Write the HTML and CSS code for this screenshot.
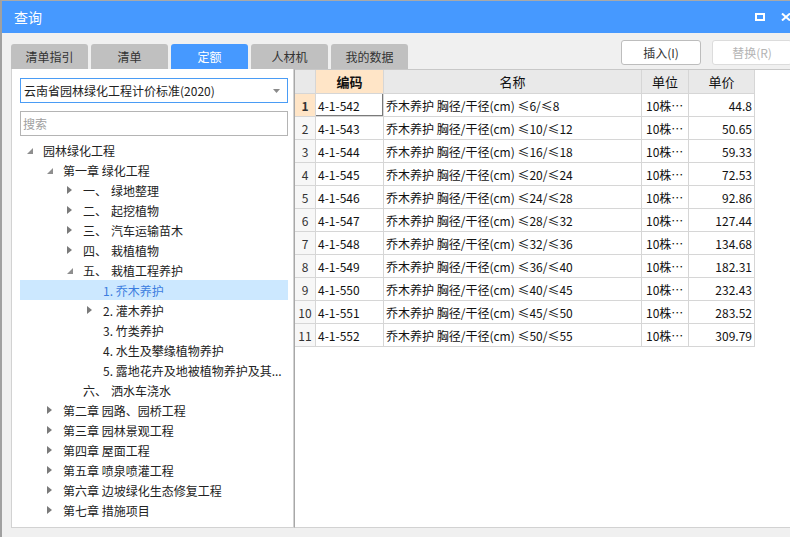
FILE: index.html
```html
<!DOCTYPE html>
<html lang="zh-CN">
<head>
<meta charset="utf-8">
<title>查询</title>
<link rel="stylesheet" href="styles.css">
</head>
<body>
<div class="window">
  <div class="titlebar">
    <span class="title">查询</span>
    <div class="winbtns">
      <svg class="ico-max" width="10" height="8" viewBox="0 0 10 8"><rect x="1" y="1" width="8" height="6" fill="none" stroke="#fff" stroke-width="2"/></svg>
      <svg class="ico-close" width="10" height="8" viewBox="0 0 10 8"><path d="M1 0.5 L9 7.5 M9 0.5 L1 7.5" stroke="#fff" stroke-width="2"/></svg>
    </div>
  </div>
  <div class="toolbar">
    <div class="tabs">
      <div class="tab">清单指引</div>
      <div class="tab">清单</div>
      <div class="tab active">定额</div>
      <div class="tab">人材机</div>
      <div class="tab">我的数据</div>
    </div>
    <div class="actions">
      <button class="btn">插入(I)</button>
      <button class="btn disabled">替换(R)</button>
    </div>
  </div>
  <div class="main">
    <div class="left">
      <div class="select">
        <span>云南省园林绿化工程计价标准(2020)</span>
        <svg class="caret" width="7" height="4" viewBox="0 0 7 4"><path d="M0 0 L7 0 L3.5 4 Z" fill="#8a8a8a"/></svg>
      </div>
      <div class="search">搜索</div>
      <ul class="tree">
        <li class="node lv0"><span class="tw"><i class="exp"></i></span><span>园林绿化工程</span></li>
        <li class="node lv1"><span class="tw"><i class="exp"></i></span><span>第一章 绿化工程</span></li>
        <li class="node lv2"><span class="tw"><i class="col"></i></span><span class="num">一、</span><span>绿地整理</span></li>
        <li class="node lv2"><span class="tw"><i class="col"></i></span><span class="num">二、</span><span>起挖植物</span></li>
        <li class="node lv2"><span class="tw"><i class="col"></i></span><span class="num">三、</span><span>汽车运输苗木</span></li>
        <li class="node lv2"><span class="tw"><i class="col"></i></span><span class="num">四、</span><span>栽植植物</span></li>
        <li class="node lv2"><span class="tw"><i class="exp"></i></span><span class="num">五、</span><span>栽植工程养护</span></li>
        <li class="node lv3 sel"><span class="tw"></span><span>1. 乔木养护</span></li>
        <li class="node lv3"><span class="tw"><i class="col"></i></span><span>2. 灌木养护</span></li>
        <li class="node lv3"><span class="tw"></span><span>3. 竹类养护</span></li>
        <li class="node lv3"><span class="tw"></span><span>4. 水生及攀缘植物养护</span></li>
        <li class="node lv3"><span class="tw"></span><span>5. 露地花卉及地被植物养护及其...</span></li>
        <li class="node lv2"><span class="tw"></span><span class="num">六、</span><span>洒水车浇水</span></li>
        <li class="node lv1"><span class="tw"><i class="col"></i></span><span>第二章 园路、园桥工程</span></li>
        <li class="node lv1"><span class="tw"><i class="col"></i></span><span>第三章 园林景观工程</span></li>
        <li class="node lv1"><span class="tw"><i class="col"></i></span><span>第四章 屋面工程</span></li>
        <li class="node lv1"><span class="tw"><i class="col"></i></span><span>第五章 喷泉喷灌工程</span></li>
        <li class="node lv1"><span class="tw"><i class="col"></i></span><span>第六章 边坡绿化生态修复工程</span></li>
        <li class="node lv1"><span class="tw"><i class="col"></i></span><span>第七章 措施项目</span></li>
      </ul>
    </div>
    <div class="grid-panel">
      <div class="grid">
        <div class="c h"></div>
        <div class="c h cur">编码</div>
        <div class="c h">名称</div>
        <div class="c h">单位</div>
        <div class="c h">单价</div>

        <div class="c rn cur">1</div>
        <div class="c focus">4-1-542</div>
        <div class="c">乔木养护 胸径/干径(cm) ≤6/≤8</div>
        <div class="c u">10株…</div>
        <div class="c r">44.8</div>

        <div class="c rn">2</div>
        <div class="c">4-1-543</div>
        <div class="c">乔木养护 胸径/干径(cm) ≤10/≤12</div>
        <div class="c u">10株…</div>
        <div class="c r">50.65</div>

        <div class="c rn">3</div>
        <div class="c">4-1-544</div>
        <div class="c">乔木养护 胸径/干径(cm) ≤16/≤18</div>
        <div class="c u">10株…</div>
        <div class="c r">59.33</div>

        <div class="c rn">4</div>
        <div class="c">4-1-545</div>
        <div class="c">乔木养护 胸径/干径(cm) ≤20/≤24</div>
        <div class="c u">10株…</div>
        <div class="c r">72.53</div>

        <div class="c rn">5</div>
        <div class="c">4-1-546</div>
        <div class="c">乔木养护 胸径/干径(cm) ≤24/≤28</div>
        <div class="c u">10株…</div>
        <div class="c r">92.86</div>

        <div class="c rn">6</div>
        <div class="c">4-1-547</div>
        <div class="c">乔木养护 胸径/干径(cm) ≤28/≤32</div>
        <div class="c u">10株…</div>
        <div class="c r">127.44</div>

        <div class="c rn">7</div>
        <div class="c">4-1-548</div>
        <div class="c">乔木养护 胸径/干径(cm) ≤32/≤36</div>
        <div class="c u">10株…</div>
        <div class="c r">134.68</div>

        <div class="c rn">8</div>
        <div class="c">4-1-549</div>
        <div class="c">乔木养护 胸径/干径(cm) ≤36/≤40</div>
        <div class="c u">10株…</div>
        <div class="c r">182.31</div>

        <div class="c rn">9</div>
        <div class="c">4-1-550</div>
        <div class="c">乔木养护 胸径/干径(cm) ≤40/≤45</div>
        <div class="c u">10株…</div>
        <div class="c r">232.43</div>

        <div class="c rn">10</div>
        <div class="c">4-1-551</div>
        <div class="c">乔木养护 胸径/干径(cm) ≤45/≤50</div>
        <div class="c u">10株…</div>
        <div class="c r">283.52</div>

        <div class="c rn">11</div>
        <div class="c">4-1-552</div>
        <div class="c">乔木养护 胸径/干径(cm) ≤50/≤55</div>
        <div class="c u">10株…</div>
        <div class="c r">309.79</div>
      </div>
    </div>
  </div>
</div>
</body>
</html>
```

FILE: styles.css
```css
html, body {
  margin: 0;
  padding: 0;
}
body {
  width: 790px;
  height: 537px;
  overflow: hidden;
  background: #f0f0f0;
  font-family: "Noto Sans CJK SC", "Microsoft YaHei", sans-serif;
  font-size: 12px;
  color: #222;
}
.window {
  height: 537px;
  box-sizing: border-box;
  border-top: 1px solid #a9a9a9;
  border-left: 2px solid #a0a0a0;
  display: flex;
  flex-direction: column;
}
.titlebar {
  height: 32px;
  flex: none;
  background: #4699ff;
  color: #fff;
  display: flex;
  align-items: center;
  padding-left: 12px;
  font-size: 14px;
}
.winbtns {
  margin-left: auto;
  margin-right: -1px;
  display: flex;
  align-items: center;
  gap: 16px;
}
.winbtns svg {
  display: block;
}
.toolbar {
  height: 36px;
  flex: none;
  display: flex;
  align-items: flex-end;
  padding-left: 9px;
}
.tabs {
  display: flex;
  gap: 3px;
}
.tab {
  width: 77px;
  height: 25px;
  background: #c0c0c0;
  border-radius: 3px 3px 0 0;
  display: flex;
  align-items: center;
  justify-content: center;
  color: #333;
  font-size: 12px;
}
.tab.active {
  background: #4699ff;
  color: #fff;
}
.actions {
  margin-left: auto;
  margin-right: -2px;
  align-self: flex-start;
  margin-top: 7px;
  display: flex;
  gap: 11px;
}
.btn {
  width: 80px;
  height: 25px;
  box-sizing: border-box;
  border: 1px solid #bdbdbd;
  border-radius: 3px;
  background: #fff;
  font-family: inherit;
  font-size: 12px;
  color: #333;
  padding: 0;
}
.btn.disabled {
  color: #b4b4b4;
  border-color: #dcdcdc;
}
.main {
  height: 459px;
  flex: none;
  display: flex;
}
.left {
  margin-left: 9px;
  width: 283px;
  flex: none;
  box-sizing: border-box;
  background: #fff;
  border: 1px solid #d2d2d2;
  border-top: none;
  padding: 9px 5px 0 8px;
  overflow: hidden;
}
.select {
  height: 25px;
  box-sizing: border-box;
  border: 1px solid #4a9cf5;
  display: flex;
  align-items: center;
  padding: 0 7px 0 3px;
  color: #222;
}
.caret {
  margin-left: auto;
  display: block;
}
.search {
  margin-top: 8px;
  height: 25px;
  box-sizing: border-box;
  border: 1px solid #b4b4b4;
  color: #a0a0a0;
  padding-left: 2px;
  display: flex;
  align-items: center;
}
.tree {
  list-style: none;
  margin: 4px 0 0;
  padding: 0;
}
.node {
  height: 20px;
  display: flex;
  align-items: center;
  white-space: nowrap;
  overflow: hidden;
}
.node.lv1 { padding-left: 20px; }
.node.lv2 { padding-left: 40px; }
.node.lv3 { padding-left: 60px; }
.node.sel {
  background: #cce8ff;
  color: #3b7de0;
}
.tw {
  width: 23px;
  height: 20px;
  flex: none;
  box-sizing: border-box;
  padding-left: 7px;
  display: flex;
  align-items: center;
}
.tw i {
  display: block;
  width: 0;
  height: 0;
}
.tw .exp {
  border-left: 6px solid transparent;
  border-bottom: 6px solid #8e8e8e;
  margin-top: 2px;
}
.tw .col {
  border-top: 4px solid transparent;
  border-bottom: 4px solid transparent;
  border-left: 5px solid #7a7a7a;
}
.num {
  display: inline-block;
  width: 28px;
}
.grid-panel {
  flex: 1;
  background: #fff;
  border-left: 1px solid #a8a8a8;
  border-top: 1px solid #c8c8c8;
  border-bottom: 1px solid #d2d2d2;
}
.grid {
  display: grid;
  grid-template-columns: 21px 68px 258px 47px 66px;
  grid-template-rows: 24px;
  grid-auto-rows: 23px;
  width: 460px;
}
.c {
  box-sizing: border-box;
  border-right: 1px solid #d6d6d6;
  border-bottom: 1px solid #d6d6d6;
  display: flex;
  align-items: center;
  padding: 0 2px;
  overflow: hidden;
  white-space: nowrap;
  color: #111;
}
.c.h {
  background: #e9e9e9;
  justify-content: center;
  font-size: 13px;
}
.c.rn {
  background: #f7f7f7;
  justify-content: center;
  color: #333;
  padding: 0;
}
.c.cur {
  background: #ffe5c7;
  font-weight: bold;
}
.c.u {
  padding-left: 4px;
}
.c.r {
  justify-content: flex-end;
}
.c.focus {
  position: relative;
}
.c.focus::after {
  content: "";
  position: absolute;
  left: -1px;
  top: -1px;
  right: -1px;
  bottom: -1px;
  border-left: 1px solid #4699ff;
  border-top: 1px solid #8fbef5;
  border-right: 2px solid #7a7a7a;
  border-bottom: 2px solid #7a7a7a;
}
```
